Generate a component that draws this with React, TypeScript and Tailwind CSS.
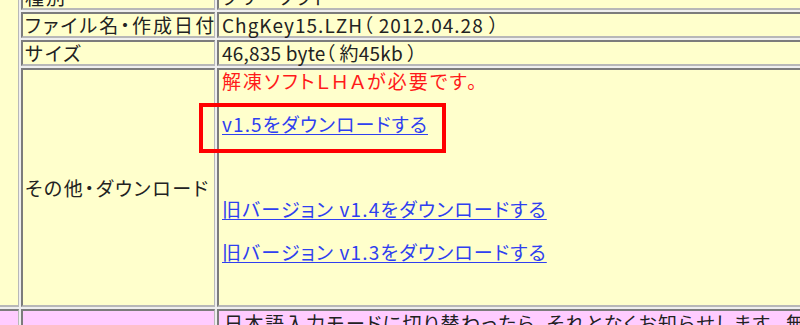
const cell =
  'p-0 align-middle border-t-2 border-l-2 border-b-2 border-r border-t-[#7c7c7c] border-l-[#7c7c7c] border-b-[#b8b8b8] border-r-[#b8b8b8]';

const Link = ({ children, className = '' }: { children: React.ReactNode; className?: string }) => (
  <a href="#" className={`text-[#2f3ff0] underline underline-offset-[2px] decoration-1 ${className}`}>
    {children}
  </a>
);

export default function App() {
  return (
    <div className="relative w-[800px] h-[325px] overflow-hidden bg-[#ffffcc] font-['Noto_Sans_CJK_JP',sans-serif] text-[19px] leading-[22px] text-[#222] [font-feature-settings:'palt']">
      <table className="-mt-[18px] -ml-[26px] border-separate border-spacing-[2px] bg-[#efefef]">
        <tbody>
          <tr>
            <td rowSpan={4} className={`${cell} bg-[#ffffcc]`}>
              <div className="w-[40px]" />
            </td>
            <td className={`${cell} bg-[#ffffcc]`}>
              <div className="w-[191px] h-[22px] px-[2px] whitespace-nowrap tracking-[2px]">種別</div>
            </td>
            <td className={`${cell} bg-[#ffffcc]`}>
              <div className="w-[700px] h-[22px] px-[3px] whitespace-nowrap tracking-[2px]">フリーソフト</div>
            </td>
          </tr>
          <tr>
            <td className={`${cell} bg-[#ffffcc]`}>
              <div className="w-[191px] h-[22px] px-[2px] whitespace-nowrap tracking-[2.1px]">ファイル名・作成日付</div>
            </td>
            <td className={`${cell} bg-[#ffffcc]`}>
              <div className="h-[22px] px-[3px] whitespace-nowrap tracking-[1px]">ChgKey15.LZH（ 2012.04.28 ）</div>
            </td>
          </tr>
          <tr>
            <td className={`${cell} bg-[#ffffcc]`}>
              <div className="w-[191px] h-[22px] px-[2px] whitespace-nowrap tracking-[2px]">サイズ</div>
            </td>
            <td className={`${cell} bg-[#ffffcc]`}>
              <div className="h-[22px] px-[3px] whitespace-nowrap tracking-[0.2px]">46,835 byte（ 約45kb ）</div>
            </td>
          </tr>
          <tr>
            <td className={`${cell} bg-[#ffffcc]`}>
              <div className="w-[191px] px-[2px] whitespace-nowrap tracking-[1.7px]">その他・ダウンロード</div>
            </td>
            <td className={`${cell} bg-[#ffffcc]`}>
              <div className="px-[3px] leading-[21.4px] whitespace-nowrap">
                <div className="text-[#ff1a1a] tracking-[2.1px]">解凍ソフトＬＨＡが必要です。</div>
                <br />
                <div>
                  <Link className="tracking-[1.1px]">v1.5をダウンロードする</Link>
                </div>
                <br />
                <br />
                <br />
                <div>
                  <Link className="tracking-[1.2px]">旧バージョン v1.4をダウンロードする</Link>
                </div>
                <br />
                <div>
                  <Link className="tracking-[1.2px]">旧バージョン v1.3をダウンロードする</Link>
                </div>
                <br />
                <br />
              </div>
            </td>
          </tr>
          <tr>
            <td className={`${cell} bg-[#ffccff]`}>
              <div className="h-[40px]" />
            </td>
            <td className={`${cell} bg-[#ffccff]`}>
              <div className="w-[191px] h-[40px]" />
            </td>
            <td className={`${cell} bg-[#ffccff] align-top`}>
              <div className="px-[5px] pt-[1px] whitespace-nowrap tracking-[1.5px]">
                日本語入力モードに切り替わったら、それとなくお知らせします。 無音
              </div>
            </td>
          </tr>
        </tbody>
      </table>
      <div className="absolute left-[199px] top-[103px] w-[247px] h-[50px] border-4 border-[#ff0000]" />
    </div>
  );
}
